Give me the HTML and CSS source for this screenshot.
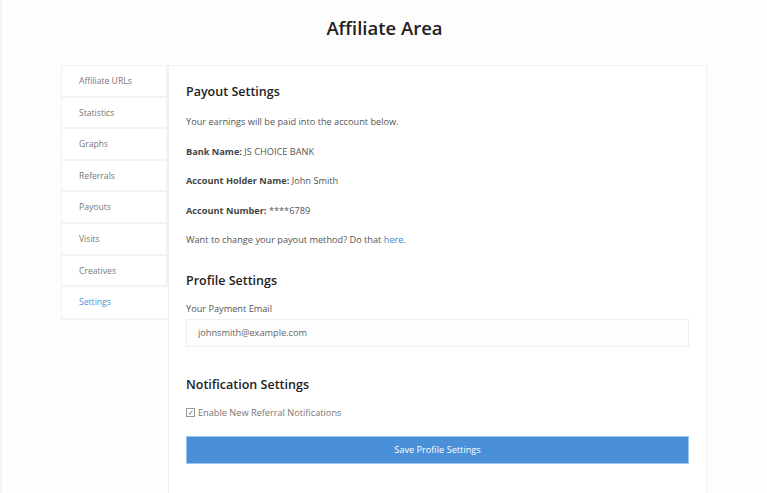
FILE: index.html
```html
<!DOCTYPE html>
<html lang="en">
<head>
    <meta charset="UTF-8">
    <meta name="viewport" content="width=device-width, initial-scale=1.0">
    <title>Affiliate Area</title>
    <link rel="stylesheet" href="styles.css">
</head>
<body>
    <div class="page">
        <h1>Affiliate Area</h1>
        <div class="area">
            <ul class="tabs">
                <li><a href="#">Affiliate URLs</a></li>
                <li><a href="#">Statistics</a></li>
                <li><a href="#">Graphs</a></li>
                <li><a href="#">Referrals</a></li>
                <li><a href="#">Payouts</a></li>
                <li><a href="#">Visits</a></li>
                <li><a href="#">Creatives</a></li>
                <li class="active"><a href="#">Settings</a></li>
            </ul>
            <div class="content">
                <h2>Payout Settings</h2>
                <p>Your earnings will be paid into the account below.</p>
                <p><strong>Bank Name:</strong> JS CHOICE BANK</p>
                <p><strong>Account Holder Name:</strong> John Smith</p>
                <p><strong>Account Number:</strong> ****6789</p>
                <p>Want to change your payout method? Do that <a href="#">here</a>.</p>

                <h2 class="section">Profile Settings</h2>
                <form>
                    <label for="payment-email">Your Payment Email</label>
                    <input type="email" id="payment-email" value="johnsmith@example.com">

                    <h2 class="section notify">Notification Settings</h2>
                    <label class="check"><span class="box">&#10003;</span>Enable New Referral Notifications</label>

                    <button type="submit">Save Profile Settings</button>
                </form>
            </div>
        </div>
    </div>
</body>
</html>
```

FILE: styles.css
```css
html, body {
    height: 100%;
}
body {
    margin: 0;
    font-family: "Open Sans", "Noto Sans", sans-serif;
    color: #555;
    background: #fdfdfd;
    overflow: hidden;
}
.page {
    height: 100%;
    border-left: 2px solid #f3f4f5;
    box-sizing: border-box;
}
h1 {
    margin: 0;
    padding-top: 15px;
    height: 50px;
    box-sizing: border-box;
    text-align: center;
    font-size: 18.5px;
    font-weight: 600;
    color: #222;
    line-height: 26px;
}
.area {
    display: flex;
    margin: 15px 0 0 59px;
    width: 646px;
    height: calc(100% - 65px);
}
.tabs {
    list-style: none;
    margin: 0;
    padding: 0;
    width: 106px;
    border: 1px solid #f2f3f4;
    border-right: none;
    align-self: flex-start;
}
.tabs li {
    height: 31.6px;
    border-bottom: 2px solid #f2f3f4;
    border-right: 2px solid #f2f3f4;
    box-sizing: border-box;
    background: #fff;
}
.tabs li:last-child {
    border-bottom-width: 1px;
}
.tabs a {
    display: block;
    padding-left: 17px;
    line-height: 30px;
    font-size: 8.6px;
    color: #777;
    text-decoration: none;
}
.tabs li.active {
    border-right: none;
}
.tabs li.active a {
    color: #4a90d9;
}
.content {
    flex: 1;
    border: 1px solid #f0f1f2;
    border-bottom: none;
    padding: 14px 17px 0 17px;
    background: #fff;
}
h2 {
    margin: 0;
    font-size: 12.5px;
    font-weight: 600;
    color: #222;
    line-height: 24px;
}
p {
    margin: 0;
    font-size: 9.2px;
    line-height: 29.5px;
}
.content h2 + p {
    margin-top: 3px;
}
p strong {
    color: #444;
}
a {
    color: #3d85d6;
    text-decoration: none;
}
h2.section {
    margin-top: 14px;
}
label {
    display: block;
    font-size: 9.2px;
    line-height: 14px;
    margin-top: 9px;
}
input {
    display: block;
    width: 100%;
    box-sizing: border-box;
    height: 28px;
    margin-top: 3px;
    padding: 0 11px;
    border: 1px solid #eceeef;
    background: #fdfdfd;
    font-family: inherit;
    font-size: 9.2px;
    color: #666;
}
h2.notify {
    margin-top: 26px;
}
.check {
    display: flex;
    align-items: center;
    margin-top: 9px;
    color: #777;
}
.box {
    display: inline-block;
    width: 7px;
    height: 7px;
    border: 1px solid #999;
    margin-right: 3px;
    font-size: 7px;
    line-height: 7px;
    text-align: center;
    color: #666;
}
button {
    display: block;
    width: 100%;
    height: 28px;
    margin-top: 16px;
    border: 1px solid #9cc4ee;
    background: #4a90d9;
    color: #fff;
    font-family: inherit;
    font-size: 9.2px;
    cursor: pointer;
}
```
